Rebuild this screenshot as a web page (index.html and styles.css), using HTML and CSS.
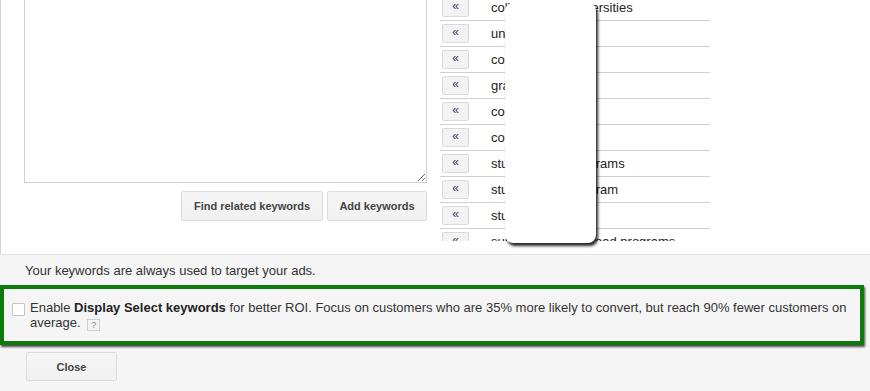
FILE: index.html
```html
<!DOCTYPE html>
<html>
<head>
<meta charset="utf-8">
<link rel="stylesheet" href="styles.css">
</head>
<body>
<div class="page">
  <div class="top">
    <div class="entry">
      <textarea class="kw-input"></textarea>
      <div class="btn-row">
        <button class="btn">Find related keywords</button>
        <button class="btn">Add keywords</button>
      </div>
    </div>
    <div class="suggest">
      <ul class="sugg-list">
        <li class="sugg"><button class="add">«</button><span class="term">colleges and universities</span></li>
        <li class="sugg"><button class="add">«</button><span class="term">universities</span></li>
        <li class="sugg"><button class="add">«</button><span class="term">colleges</span></li>
        <li class="sugg"><button class="add">«</button><span class="term">graduate school</span></li>
        <li class="sugg"><button class="add">«</button><span class="term">college</span></li>
        <li class="sugg"><button class="add">«</button><span class="term">college degree</span></li>
        <li class="sugg"><button class="add">«</button><span class="term">study abroad programs</span></li>
        <li class="sugg"><button class="add">«</button><span class="term">study abroad program</span></li>
        <li class="sugg"><button class="add">«</button><span class="term">study abroad</span></li>
        <li class="sugg"><button class="add">«</button><span class="term">summer study abroad programs</span></li>
      </ul>
    </div>
  </div>
  <div class="bottom">
    <p class="note">Your keywords are always used to target your ads.</p>
    <div class="select-box">
      <input type="checkbox" class="check">
      <p class="select-text">Enable <b>Display Select keywords</b> for better ROI. Focus on customers who are 35% more likely to convert, but reach 90% fewer customers on average. <span class="help">?</span></p>
    </div>
    <button class="btn close">Close</button>
  </div>
  <div class="popup"></div>
</div>
</body>
</html>
```

FILE: styles.css
```css
html, body {
  margin: 0;
  padding: 0;
  background: #f5f5f5;
  font-family: "Liberation Sans", Arial, sans-serif;
}

.page {
  position: relative;
  width: 870px;
  min-height: 391px;
}

.top {
  display: flex;
  height: 254px;
  background: #fff;
  border-left: 1px solid #d4d4d4;
  box-sizing: border-box;
}

.entry {
  display: flex;
  flex-direction: column;
  align-items: flex-end;
  padding-left: 23px;
  width: 403px;
}

.kw-input {
  display: block;
  box-sizing: border-box;
  width: 403px;
  height: 183px;
  margin: 0;
  padding: 4px;
  border: 1px solid #d0d0d0;
  border-top: none;
  background: #fff;
  outline: none;
}

.btn-row {
  display: flex;
  gap: 4px;
  margin-top: 8px;
}

.btn {
  height: 30px;
  box-sizing: border-box;
  padding: 0;
  border: 1px solid #dcdcdc;
  border-radius: 2px;
  background: linear-gradient(#f5f5f5, #f1f1f1);
  color: #444;
  font-family: "Liberation Sans", Arial, sans-serif;
  font-size: 11px;
  font-weight: bold;
  white-space: nowrap;
}

.btn-row .btn:first-child { width: 142px; }
.btn-row .btn:last-child { width: 100px; }

.suggest {
  margin-left: 13px;
  width: 270px;
  height: 241px;
  overflow: hidden;
}

.sugg-list {
  list-style: none;
  margin: -5px 0 0 0;
  padding: 0;
}

.sugg {
  display: flex;
  align-items: center;
  height: 26px;
  box-sizing: border-box;
  border-bottom: 1px solid #d0d0d0;
  padding-left: 2px;
}

.add {
  width: 27px;
  height: 19px;
  box-sizing: border-box;
  margin: 0;
  padding: 0 0 3px 0;
  border: 1px solid #dadada;
  border-radius: 2px;
  background: #f3f3f3;
  color: #3d3d6e;
  font-family: "Liberation Sans", Arial, sans-serif;
  font-size: 12px;
  line-height: 12px;
}

.term {
  margin-left: 22px;
  font-size: 13px;
  color: #222;
  white-space: nowrap;
}

.bottom {
  border-top: 1px solid #e2e2e2;
  background: #f5f5f5;
  padding-bottom: 10px;
}

.note {
  margin: 0;
  padding: 8px 0 0 25px;
  font-size: 13px;
  line-height: 16px;
  color: #333;
}

.select-box {
  display: flex;
  align-items: flex-start;
  width: 864px;
  box-sizing: border-box;
  margin-top: 6px;
  padding: 11px 4px 10px 8px;
  border: 4px solid #0b7a0b;
  box-shadow: 1px 2px 2px rgba(0, 0, 0, 0.7);
}

.check {
  appearance: none;
  -webkit-appearance: none;
  flex: none;
  width: 13px;
  height: 13px;
  margin: 3px 5px 0 0;
  box-sizing: border-box;
  border: 1px solid #c4c4c4;
  border-radius: 1px;
  background: #fff;
}

.select-text {
  margin: 0;
  font-size: 13px;
  line-height: 15px;
  color: #333;
}

.select-text b {
  color: #222;
}

.help {
  display: inline-block;
  box-sizing: border-box;
  width: 13px;
  height: 12px;
  margin-left: 3px;
  border: 1px solid #d0d0d0;
  background: #f3f3f3;
  color: #888;
  font-size: 9px;
  line-height: 10px;
  text-align: center;
  vertical-align: -1px;
}

.close {
  display: block;
  width: 91px;
  height: 29px;
  margin: 7px 0 0 26px;
}

.popup {
  position: absolute;
  left: 505px;
  top: 3px;
  width: 91px;
  height: 240px;
  background: #fff;
  border-radius: 8px;
  box-shadow: 2px 3px 3px rgba(0, 0, 0, 0.85);
}
```
